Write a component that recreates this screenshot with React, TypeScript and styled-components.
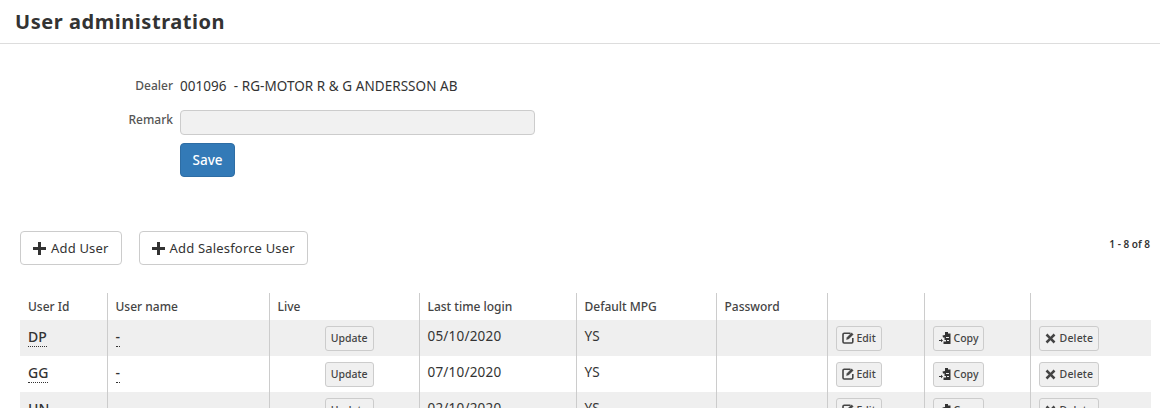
import React from 'react';
import styled, { createGlobalStyle } from 'styled-components';

const GlobalStyle = createGlobalStyle`
  html, body {
    margin: 0;
    padding: 0;
    height: 408px;
    overflow: hidden;
    background: #fff;
    font-family: "Noto Sans", "Open Sans", sans-serif;
    color: #333;
  }
  * { box-sizing: border-box; }
`;

const PageHeader = styled.header`
  height: 44px;
  padding: 8px 15px 0;
  border-bottom: 1px solid #ddd;
`;

const Title = styled.h1`
  margin: 0;
  font-size: 20px;
  line-height: 27px;
  font-weight: 700;
  color: #333;
  letter-spacing: 0.55px;
`;

const DealerForm = styled.form`
  display: grid;
  grid-template-columns: 173px 355px;
  column-gap: 7px;
  padding-top: 32px;
  height: 187px;
  align-content: start;
`;

const Label = styled.label`
  font-size: 12px;
  font-weight: 500;
  line-height: 20px;
  color: #555;
  text-align: right;
`;

const DealerValue = styled.div`
  font-size: 13.5px;
  line-height: 20px;
  color: #333;
  white-space: pre;
  letter-spacing: 0.05px;
`;

const RemarkRow = styled.div`
  display: contents;
`;

const RemarkLabel = styled(Label)`
  margin-top: 14px;
`;

const RemarkInput = styled.input`
  width: 355px;
  height: 25px;
  margin-top: 14px;
  background: #f1f1f1;
  border: 1px solid #ccc;
  border-radius: 4px;
`;

const SaveButton = styled.button`
  grid-column: 2;
  width: 55px;
  height: 34px;
  margin-top: 8px;
  background: #337ab7;
  border: 1px solid #2e6da4;
  border-radius: 4px;
  color: #fff;
  font: 500 13.5px "Noto Sans", sans-serif;
`;

const Toolbar = styled.div`
  display: flex;
  align-items: flex-start;
  gap: 17px;
  height: 62px;
  padding: 0 10px 0 20px;
`;

const AddButton = styled.button`
  display: inline-flex;
  align-items: center;
  gap: 5px;
  height: 34px;
  padding: 0 12px;
  background: #fff;
  border: 1px solid #ccc;
  border-radius: 4px;
  color: #333;
  font: 400 13px "Noto Sans", sans-serif;
  letter-spacing: 0.18px;
`;

const Paging = styled.div`
  margin-left: auto;
  margin-top: 6px;
  font-size: 10px;
  font-weight: 600;
  line-height: 14px;
  color: #333;
`;

const Table = styled.table`
  width: 1131px;
  margin-left: 20px;
  border-collapse: collapse;
  table-layout: fixed;
`;

const HeadCell = styled.th`
  height: 27px;
  padding: 0 8px;
  font-size: 12px;
  font-weight: 500;
  text-align: left;
  color: #444;
  border-left: 1px solid #ccc;
  &:first-child { border-left: 0; }
`;

const Row = styled.tr<{ $striped: boolean }>`
  background: ${p => (p.$striped ? '#efefef' : '#fff')};
`;

const Cell = styled.td`
  height: 36px;
  padding: 0 8px;
  font-size: 13.5px;
  color: #333;
  border-left: 1px solid #ccc;
  vertical-align: middle;
  &:first-child { border-left: 0; }
`;

const CellText = styled.span`
  position: relative;
  top: -2px;
  letter-spacing: 0.2px;
`;

const UserLink = styled.span`
  position: relative;
  top: -2px;
  font-size: 14px;
  font-weight: 500;
  color: #333;
  border-bottom: 1px dotted #333;
`;

const LiveCell = styled(Cell)`
  text-align: right;
  padding-right: 45px;
`;

const SmallButton = styled.button`
  display: inline-flex;
  align-items: center;
  gap: 3px;
  height: 25px;
  padding: 0 5px;
  background: #f0f0f0;
  border: 1px solid #ccc;
  border-radius: 3px;
  color: #444;
  font: 500 10.5px "Noto Sans", sans-serif;
  vertical-align: middle;
`;

const DeleteButton = styled(SmallButton)`
  gap: 4px;
  letter-spacing: 0.2px;
`;

const PlusIcon = () => (
  <svg width="13" height="13" viewBox="0 0 13 13" fill="#333">
    <path d="M5 0h3v5h5v3H8v5H5V8H0V5h5z" />
  </svg>
);

const EditIcon = () => (
  <svg width="12" height="12" viewBox="0 0 12 12" fill="none" stroke="#444">
    <path d="M8.5 1.2H2.2a1.2 1.2 0 0 0-1.2 1.2v7.4A1.2 1.2 0 0 0 2.2 11h7.4a1.2 1.2 0 0 0 1.2-1.2V6" strokeWidth="1.6" />
    <path d="M4.5 7.5 5 5.4 9.6.8l1.6 1.6L6.6 7z" fill="#444" strokeWidth="0.4" />
  </svg>
);

const CopyIcon = () => (
  <svg width="12" height="12" viewBox="0 0 12 12" fill="#333">
    <path d="M6 0h3v1.5h2.5V12H4.5V9.5H7V8H5.5V5.5H4l-.5-2L6 3z" />
    <path d="M0 8h2V6.7L4 8.5 2 10.3V9H0z" />
    <path d="M7 5h3v1H7zM8 8h2v1H8z" fill="#efefef" />
  </svg>
);

const RemoveIcon = () => (
  <svg width="11" height="11" viewBox="0 0 11 11" fill="#444">
    <path d="M2.4.6 5.5 3.7 8.6.6l1.8 1.8-3.1 3.1 3.1 3.1-1.8 1.8-3.1-3.1-3.1 3.1L.6 8.6l3.1-3.1L.6 2.4z" />
  </svg>
);

const columns = [87, 162, 150, 157, 140, 111, 97, 106, 121];
const headers = ['User Id', 'User name', 'Live', 'Last time login', 'Default MPG', 'Password', '', '', ''];

const users = [
  { id: 'DP', lastLogin: '05/10/2020', mpg: 'YS' },
  { id: 'GG', lastLogin: '07/10/2020', mpg: 'YS' },
  { id: 'HN', lastLogin: '02/10/2020', mpg: 'YS' },
];

const App: React.FC = () => {
  return (
    <>
      <GlobalStyle />
      <PageHeader>
        <Title>User administration</Title>
      </PageHeader>

      <DealerForm>
        <Label>Dealer</Label>
        <DealerValue>001096  - RG-MOTOR R &amp; G ANDERSSON AB</DealerValue>
        <RemarkRow>
          <RemarkLabel>Remark</RemarkLabel>
          <RemarkInput type="text" />
        </RemarkRow>
        <SaveButton type="button">Save</SaveButton>
      </DealerForm>

      <Toolbar>
        <AddButton type="button"><PlusIcon /> Add User</AddButton>
        <AddButton type="button"><PlusIcon /> Add Salesforce User</AddButton>
        <Paging>1 - 8 of 8</Paging>
      </Toolbar>

      <Table>
        <colgroup>
          {columns.map((w, i) => <col key={i} style={{ width: w }} />)}
        </colgroup>
        <thead>
          <tr>
            {headers.map((h, i) => <HeadCell key={i}>{h}</HeadCell>)}
          </tr>
        </thead>
        <tbody>
          {users.map((u, i) => (
            <Row key={u.id} $striped={i % 2 === 0}>
              <Cell><UserLink>{u.id}</UserLink></Cell>
              <Cell><UserLink>-</UserLink></Cell>
              <LiveCell><SmallButton type="button">Update</SmallButton></LiveCell>
              <Cell><CellText>{u.lastLogin}</CellText></Cell>
              <Cell><CellText>{u.mpg}</CellText></Cell>
              <Cell />
              <Cell><SmallButton type="button"><EditIcon /> Edit</SmallButton></Cell>
              <Cell><SmallButton type="button"><CopyIcon /> Copy</SmallButton></Cell>
              <Cell><DeleteButton type="button"><RemoveIcon /> Delete</DeleteButton></Cell>
            </Row>
          ))}
        </tbody>
      </Table>
    </>
  );
};

export default App;
